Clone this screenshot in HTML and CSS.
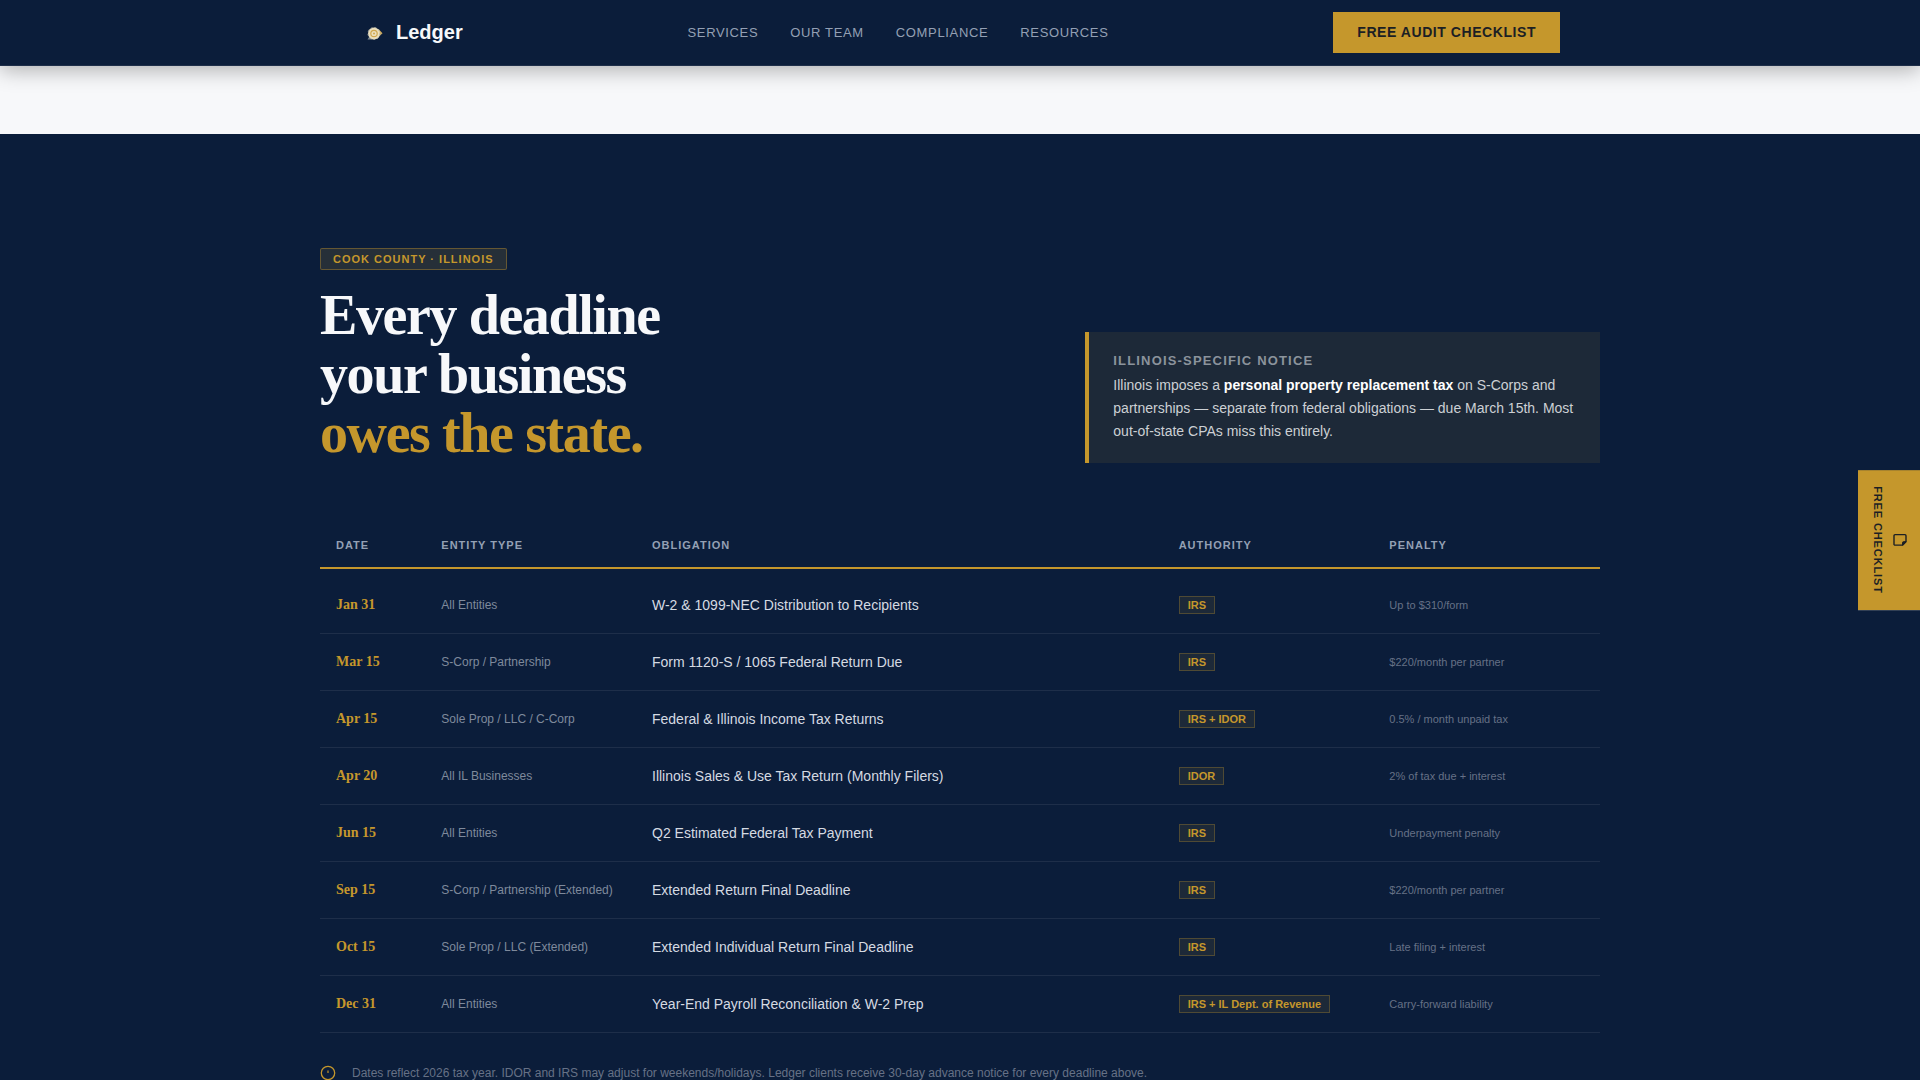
FILE: index.html
```html
<!DOCTYPE html>
<html lang="en">
<head>
  <meta charset="UTF-8">
  <meta name="viewport" content="width=device-width, initial-scale=1.0">
  <title>Ledger</title>
  <link rel="stylesheet" href="styles.css">
</head>
<body>
  <header class="nav">
    <div class="nav-inner">
      <a class="logo" href="#">
        <svg class="logo-mark" viewBox="0 0 28 28" aria-hidden="true">
          <path d="M7.500 20.500L10 16.500 13 20.500Z" fill="#7d8790"/>
          <path d="M18.500 10L22.500 14.300 18.500 18Z" fill="#d3ad5c"/>
          <circle cx="14" cy="14.500" r="6" fill="#ecdfbd"/>
          <circle cx="14" cy="14.500" r="6" fill="none" stroke="#a9aba2" stroke-width="1" stroke-dasharray="2 2"/>
          <circle cx="14" cy="14.500" r="3.200" fill="none" stroke="#d0a84f" stroke-width="1.200"/>
          <circle cx="14" cy="14.500" r="1" fill="#d0a84f"/>
        </svg>
        <span>Ledger</span>
      </a>
      <nav class="nav-links">
        <a href="#services">Services</a>
        <a href="#team">Our Team</a>
        <a href="#compliance">Compliance</a>
        <a href="#resources">Resources</a>
      </nav>
      <button class="nav-cta" type="button">Free Audit Checklist</button>
    </div>
  </header>

  <main>
    <section class="compliance" id="compliance">
      <div class="container">
        <div class="intro">
          <div class="intro-title">
            <span class="badge">Cook County · Illinois</span>
            <h1>Every deadline<br>your business<br><span class="gold">owes the state.</span></h1>
          </div>
          <aside class="notice">
            <h2>Illinois-Specific Notice</h2>
            <p>Illinois imposes a <strong>personal property replacement tax</strong> on S-Corps and partnerships — separate from federal obligations — due March 15th. Most out-of-state CPAs miss this entirely.</p>
          </aside>
        </div>

        <table class="deadlines">
          <thead>
            <tr><th>Date</th><th>Entity Type</th><th>Obligation</th><th>Authority</th><th>Penalty</th></tr>
          </thead>
          <tbody>
            <tr>
              <td class="date">Jan 31</td>
              <td class="entity">All Entities</td>
              <td class="obligation">W-2 &amp; 1099-NEC Distribution to Recipients</td>
              <td><span class="tag">IRS</span></td>
              <td class="penalty">Up to $310/form</td>
            </tr>
            <tr>
              <td class="date">Mar 15</td>
              <td class="entity">S-Corp / Partnership</td>
              <td class="obligation">Form 1120-S / 1065 Federal Return Due</td>
              <td><span class="tag">IRS</span></td>
              <td class="penalty">$220/month per partner</td>
            </tr>
            <tr>
              <td class="date">Apr 15</td>
              <td class="entity">Sole Prop / LLC / C-Corp</td>
              <td class="obligation">Federal &amp; Illinois Income Tax Returns</td>
              <td><span class="tag">IRS + IDOR</span></td>
              <td class="penalty">0.5% / month unpaid tax</td>
            </tr>
            <tr>
              <td class="date">Apr 20</td>
              <td class="entity">All IL Businesses</td>
              <td class="obligation">Illinois Sales &amp; Use Tax Return (Monthly Filers)</td>
              <td><span class="tag">IDOR</span></td>
              <td class="penalty">2% of tax due + interest</td>
            </tr>
            <tr>
              <td class="date">Jun 15</td>
              <td class="entity">All Entities</td>
              <td class="obligation">Q2 Estimated Federal Tax Payment</td>
              <td><span class="tag">IRS</span></td>
              <td class="penalty">Underpayment penalty</td>
            </tr>
            <tr>
              <td class="date">Sep 15</td>
              <td class="entity">S-Corp / Partnership (Extended)</td>
              <td class="obligation">Extended Return Final Deadline</td>
              <td><span class="tag">IRS</span></td>
              <td class="penalty">$220/month per partner</td>
            </tr>
            <tr>
              <td class="date">Oct 15</td>
              <td class="entity">Sole Prop / LLC (Extended)</td>
              <td class="obligation">Extended Individual Return Final Deadline</td>
              <td><span class="tag">IRS</span></td>
              <td class="penalty">Late filing + interest</td>
            </tr>
            <tr>
              <td class="date">Dec 31</td>
              <td class="entity">All Entities</td>
              <td class="obligation">Year-End Payroll Reconciliation &amp; W-2 Prep</td>
              <td><span class="tag">IRS + IL Dept. of Revenue</span></td>
              <td class="penalty">Carry-forward liability</td>
            </tr>
          </tbody>
        </table>

        <div class="footnote">
          <svg viewBox="0 0 16 16" aria-hidden="true">
            <circle cx="8" cy="8" r="6.700" fill="none" stroke="currentColor" stroke-width="1.300"/>
            <path d="M8 5.500V8" stroke="currentColor" stroke-width="1.200"/>
          </svg>
          <p>Dates reflect 2026 tax year. IDOR and IRS may adjust for weekends/holidays. Ledger clients receive 30-day advance notice for every deadline above.</p>
        </div>
      </div>
    </section>
  </main>

  <button class="side-tab" type="button">
    <svg viewBox="0 0 16 16" aria-hidden="true">
      <path d="M3 2.500H13a1 1 0 0 1 1 1V9.500L10.500 13H3a1 1 0 0 1-1-1V3.500a1 1 0 0 1 1-1Z" fill="none" stroke="currentColor" stroke-width="1.400" stroke-linejoin="round"/>
      <path d="M14 9.500H11.500a1 1 0 0 0-1 1V13Z" fill="currentColor" stroke="currentColor" stroke-linejoin="round"/>
    </svg>
    <span>Free Checklist</span>
  </button>
</body>
</html>
```

FILE: styles.css
```css
* {
  box-sizing: border-box;
  margin: 0;
  padding: 0;
}
:root {
  --navy: #0b1d3a;
  --gold: #c5972c;
  --light: #f7f8fa;
}
body {
  background: var(--light);
  color: var(--light);
  font-family: "Liberation Sans", Arial, sans-serif;
}
button {
  font-family: inherit;
  border: none;
  cursor: pointer;
}
a {
  text-decoration: none;
}

/* nav */
.nav {
  position: sticky;
  top: 0;
  z-index: 10;
  background: var(--navy);
  border-bottom: 1px solid rgba(255, 255, 255, 0.08);
  box-shadow: 0 4px 20px rgba(0, 0, 0, 0.3);
}
.nav-inner {
  max-width: 1280px;
  margin: 0 auto;
  padding: 12px 40px;
  display: flex;
  align-items: center;
  justify-content: space-between;
}
.logo {
  display: flex;
  align-items: center;
  gap: 8px;
  color: var(--light);
  font-size: 20px;
  font-weight: bold;
}
.logo-mark {
  width: 28px;
  height: 28px;
}
.nav-links {
  display: flex;
  gap: 32px;
}
.nav-links a {
  color: #94a0b4;
  font-size: 13px;
  letter-spacing: 0.05em;
  text-transform: uppercase;
}
.nav-cta {
  background: var(--gold);
  color: #1c1f24;
  padding: 12px 24px;
  font-size: 14px;
  line-height: 17px;
  font-weight: bold;
  letter-spacing: 0.04em;
  text-transform: uppercase;
}

/* deadlines section */
.compliance {
  margin-top: 68px;
  padding: 114px 24px;
  background: var(--navy);
}
.container {
  max-width: 1280px;
  margin: 0 auto;
}
.intro {
  display: grid;
  grid-template-columns: repeat(12, 1fr);
  column-gap: 32px;
  align-items: end;
  margin-bottom: 60px;
}
.intro-title {
  grid-column: span 7;
}
.badge {
  display: block;
  width: fit-content;
  padding: 4px 12px;
  background: rgba(197, 151, 44, 0.15);
  border: 1px solid rgba(197, 151, 44, 0.4);
  border-radius: 2px;
  color: var(--gold);
  font-size: 11px;
  line-height: 12px;
  font-weight: bold;
  letter-spacing: 1px;
  text-transform: uppercase;
}
h1 {
  margin-top: 16px;
  font-family: "Liberation Serif", "Times New Roman", serif;
  font-size: 56px;
  line-height: 59px;
  letter-spacing: -0.025em;
}
.gold {
  color: var(--gold);
}
.notice {
  grid-column: span 5;
  padding: 20px 24px;
  background: rgba(197, 151, 44, 0.1);
  border-left: 4px solid var(--gold);
}
.notice h2 {
  margin-bottom: 4px;
  color: #8b939c;
  font-size: 13px;
  line-height: 18px;
  letter-spacing: 0.09em;
  text-transform: uppercase;
}
.notice p {
  color: #ccd0d4;
  font-size: 14px;
  line-height: 23px;
}
.notice strong {
  color: #fff;
}

.deadlines,
.deadlines thead,
.deadlines tbody {
  display: block;
}
.deadlines tr {
  display: grid;
  grid-template-columns: repeat(12, 1fr);
  column-gap: 16px;
  align-items: center;
  padding: 16px;
  border-bottom: 1px solid rgba(255, 255, 255, 0.08);
}
.deadlines thead tr {
  margin-bottom: 8px;
  border-bottom: 2px solid var(--gold);
}
.deadlines th,
.deadlines td {
  grid-column: span 2;
  text-align: left;
  line-height: 24px;
}
.deadlines th:nth-child(1),
.deadlines td:nth-child(1) {
  grid-column: span 1;
}
.deadlines th:nth-child(3),
.deadlines td:nth-child(3) {
  grid-column: span 5;
}
.deadlines th {
  color: #94a0b4;
  font-size: 11px;
  line-height: 12px;
  letter-spacing: 1px;
  text-transform: uppercase;
}
.deadlines .date {
  color: var(--gold);
  font-family: "Liberation Serif", "Times New Roman", serif;
  font-size: 14px;
  font-weight: bold;
}
.deadlines .entity {
  color: #7f8a9c;
  font-size: 12px;
}
.deadlines .obligation {
  color: #d5dae2;
  font-size: 14px;
}
.deadlines .penalty {
  color: #667186;
  font-size: 11px;
}
.tag {
  display: block;
  width: fit-content;
  padding: 2px 8px;
  background: rgba(197, 151, 44, 0.1);
  border: 1px solid rgba(197, 151, 44, 0.3);
  color: var(--gold);
  font-size: 11px;
  line-height: 12px;
  font-weight: bold;
}

.footnote {
  display: flex;
  align-items: center;
  gap: 16px;
  margin-top: 32px;
  color: #667186;
  font-size: 12px;
  line-height: 16px;
}
.footnote svg {
  width: 16px;
  height: 16px;
  color: var(--gold);
}

/* tab stuck to the right edge */
.side-tab {
  position: fixed;
  right: 0;
  top: 50%;
  transform: translateY(-50%);
  z-index: 20;
  display: flex;
  flex-direction: column;
  align-items: center;
  gap: 8px;
  padding: 16px 12px 16px 14px;
  background: var(--gold);
  color: #1c1f24;
  writing-mode: vertical-rl;
  font-size: 11px;
  font-weight: bold;
  letter-spacing: 0.08em;
  text-transform: uppercase;
}
.side-tab svg {
  width: 16px;
  height: 16px;
}
```
